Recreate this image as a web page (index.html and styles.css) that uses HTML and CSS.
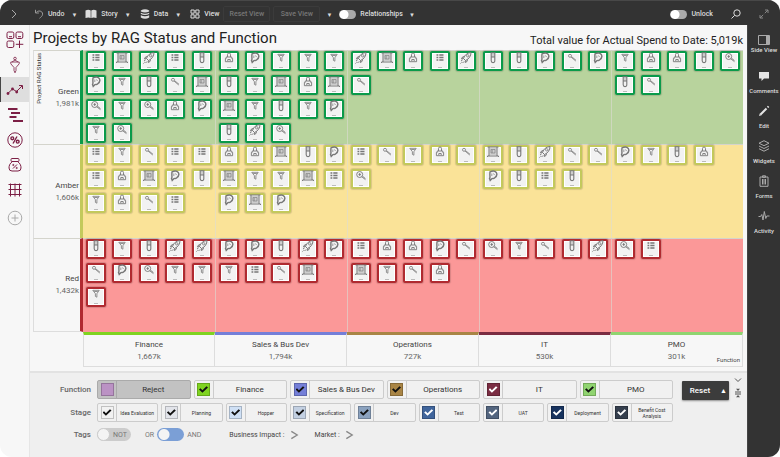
FILE: index.html
```html
<!DOCTYPE html>
<html lang="en">
<head>
<meta charset="utf-8">
<title>Projects by RAG Status and Function</title>
<link rel="stylesheet" href="styles.css">
</head>
<body>
<svg class="sprite" aria-hidden="true">
  <symbol id="t-list" viewBox="0 0 12 12"><path d="M2.500 3h1.800M5.300 3h4.200M2.500 5.500h1.800M5.300 5.500h4.200M2.500 8h1.800M5.300 8h4.200" stroke-width="1.400"/></symbol>
  <symbol id="t-screen" viewBox="0 0 12 12"><path d="M0.500 1h11M1 10h10" stroke-width="1.200"/><path d="M2 1v9M10 1v9M1 9.500l-.8 1.500M11 9.500l.8 1.500" stroke-width="1"/><path class="tint" d="M2.500 2h7v7h-7z"/><path d="M4 3.500h4v3.500H4zM5.200 4v3" stroke-width=".6"/></symbol>
  <symbol id="t-rocket" viewBox="0 0 12 12"><path d="M3.500 6.500C4.500 3 7 1 11 .5C11 4 9 7 5.500 8.500zM4.500 4.500L2.500 5L1.500 7L3.500 6.500M7.500 7.500L7 9.500L5.200 10.500L5.500 8.500M1 9l1.500-1M2.500 11l1.500-1.500M.5 11.500l1-1" stroke-width="1"/><circle cx="7.700" cy="3.800" r="1.200" stroke-width=".8"/></symbol>
  <symbol id="t-tube" viewBox="0 0 12 12"><path d="M3.500 .7h5M4.200 1v7.800a1.800 1.800 0 0 0 3.600 0V1M4.200 5h3.600" stroke-width="1.100"/><path class="tint" d="M4.700 1h2.600v4H4.700z"/></symbol>
  <symbol id="t-printer" viewBox="0 0 12 12"><path d="M4.500 5V2.500a1.500 1.500 0 0 1 3 0V5M3.200 5h5.600v1.500h.8v3.200H2.400V6.500h.8zM4.800 9V7.500h2.400V9" stroke-width=".9"/></symbol>
  <symbol id="t-hand" viewBox="0 0 12 12"><path d="M3 1.800C5 1 8 .8 9.300 2.500C10.500 4.500 9.500 6.500 7.500 8C6.500 9 5.500 7.800 4.500 9L3.200 10.500L2.500 8.500C3.500 7.500 2.500 6 3 1.800z" stroke-width="1.400"/><path d="M4.800 3.500v2.500M6.500 3.500l1 1.500" stroke-width=".7"/></symbol>
  <symbol id="t-funnel" viewBox="0 0 12 12"><path d="M2.800 2.300h6.400L6.900 5.700v3.500l-1.500-.8V5.700zM4.200 3.500h3.600" stroke-width=".8"/></symbol>
  <symbol id="t-key" viewBox="0 0 12 12"><circle cx="4" cy="3.800" r="1.500" stroke-width=".8"/><path d="M5 5l4.700 4M5.800 4.800L10 8.300" stroke-width=".8"/></symbol>
  <symbol id="t-zoom" viewBox="0 0 12 12"><circle cx="4.700" cy="4.500" r="3" stroke-width=".9"/><path d="M6.800 6.800l3.600 2.800M7.500 6.200l3 2.500M4.700 3v3M3.500 4.500h2.400" stroke-width=".9"/></symbol>
</svg>

<div class="app">
  <header class="toolbar">
    <button class="tool tool--lead" type="button" aria-label="Expand"><svg class="ico" viewBox="0 0 10 10"><path d="M3 1l4 4-4 4"/></svg></button>
    <button class="tool tool--undo" type="button"><svg class="ico" viewBox="0 0 10 10"><path d="M1.500 .8v3.200h3.400M1.800 3.800C4 .8 8.700 1.700 8.600 5.200C8.500 7 7 8 5.500 9.300"/></svg>Undo<span class="caret">▼</span></button>
    <button class="tool tool--story" type="button"><svg class="ico ico--wide" viewBox="0 0 12 10"><path class="solid" d="M.5 1.500Q3.500 0 5.700 1.500V9Q3.500 7.800.5 9zM6.300 1.500Q8.500 0 11.500 1.500V9Q8.500 7.800 6.300 9z"/></svg>Story<span class="caret">▼</span></button>
    <button class="tool tool--data" type="button"><svg class="ico" viewBox="0 0 10 10"><path class="solid" d="M.8 1.500Q5-1 9.200 1.500V2.600Q5 4.600.8 2.600zM.8 3.700Q5 5.700 9.200 3.700V5.100Q5 7 .8 5.100zM.8 6.200Q5 8.200 9.200 6.200V8.500Q5 11 .8 8.500z"/></svg>Data<span class="caret">▼</span></button>
    <button class="tool tool--view" type="button"><svg class="ico" viewBox="0 0 10 10"><path d="M1 1h3.200v3.200H1zM5.800 1H9v3.200H5.800zM1 5.800h3.200V9H1zM5.800 5.800H9V9H5.800z"/></svg>View</button>
    <div class="view-actions">
      <button class="ghost" type="button" disabled>Reset View</button>
      <button class="ghost" type="button" disabled>Save View</button>
      <button class="tool" type="button" aria-label="View options"><span class="caret">▼</span></button>
    </div>
    <label class="switch"><input type="checkbox">Relationships</label>
    <button class="tool tool--more" type="button" aria-label="Relationship options"><span class="caret">▼</span></button>
    <div class="toolbar-end">
      <label class="switch"><input type="checkbox">Unlock</label>
      <button class="tool" type="button" aria-label="Search"><svg class="ico" viewBox="0 0 10 10"><circle cx="6" cy="4" r="3.200"/><path d="M3.600 6.400L.5 9.500"/></svg></button>
      <button class="tool tool--dim" type="button" aria-label="Full screen"><svg class="ico" viewBox="0 0 10 10"><path d="M6 1h3v3M9 1L5.800 4.200M1 6v3h3M1 9l3.200-3.200"/></svg></button>
    </div>
  </header>

  <div class="workspace">
    <nav class="rail">
      <a class="rail-link" href="#" aria-label="Dashboards"><svg viewBox="0 0 18 18"><rect x="1" y="1" width="6.800" height="6.500" rx="1.500"/><rect x="10" y="1" width="6.800" height="6.500" rx="1.500"/><rect x="1" y="10" width="6.800" height="6.500" rx="1.500"/><path d="M13.500 9.500v7.500M9.800 13.300h7.500M3 5.700h3M12 5.700h3"/></svg></a>
      <a class="rail-link" href="#" aria-label="Funnel"><svg viewBox="0 0 18 18"><g stroke-width=".8"><circle cx="9" cy="2.500" r="1.300"/><path d="M4.800 6h8.400v1.800L10 11.500v3L9 16.800l-1-2.300v-3L4.800 7.800zM6 6l3-2 3 2"/></g></svg></a>
      <a class="rail-link rail-link--on" href="#" aria-label="Trends"><svg viewBox="0 0 18 18"><path d="M1.800 12.500L6.500 8l4 2.500L16 5M13 4.500h3.500V8"/><g class="solid"><circle cx="2" cy="12.500" r="1.400"/><circle cx="6.500" cy="8" r="1.400"/><circle cx="10.700" cy="11" r="1.400"/></g></svg></a>
      <a class="rail-link" href="#" aria-label="Roadmap"><svg viewBox="0 0 18 18"><path d="M2 3h9.500M5 7h9M3.500 11h7M7 15h10" stroke-width="2"/></svg></a>
      <a class="rail-link" href="#" aria-label="Ratios"><svg viewBox="0 0 18 18"><circle cx="9" cy="9" r="7.200"/><g stroke-width="1.400"><path d="M7 12.500l4-7"/><circle cx="6.300" cy="7.300" r="1.400"/><circle cx="11.700" cy="10.700" r="1.400"/></g></svg></a>
      <a class="rail-link" href="#" aria-label="Budget"><svg viewBox="0 0 18 18"><rect x="5" y="2.500" width="8" height="3" rx="1"/><path d="M6.500 5.500C3.500 7.500 3 10 3 12a3 3 0 0 0 3 3h6a3 3 0 0 0 3-3c0-2-.5-4.500-3.500-6.500M7 12.500L11 8.500"/><circle cx="7.300" cy="9" r=".6"/><circle cx="10.700" cy="12" r=".6"/></svg></a>
      <a class="rail-link" href="#" aria-label="Grid"><svg viewBox="0 0 18 18"><path d="M2.500 3.500h13M2.500 8.500h13M2.500 13.500h13M4.500 2.500v13M9 2.500v13M13.500 2.500v13"/></svg></a>
      <a class="rail-link rail-link--add" href="#" aria-label="Add"><svg viewBox="0 0 18 18"><circle cx="9" cy="9" r="6.800"/><path d="M9 5.500v7M5.500 9h7"/></svg></a>
    </nav>

    <main class="main">
      <div class="heading">
        <h1>Projects by RAG Status and Function</h1>
        <p>Total value for Actual Spend to Date: 5,019k</p>
      </div>

      <table class="matrix">
        <colgroup><col class="col-head"><col><col><col><col><col></colgroup>
        <tbody id="matrix-body">
          <tr class="band band--green">
            <th scope="row"><span class="axis-y">Project RAG Status</span>Green<small>1,981k</small></th>
            <td data-items="list screen rocket list tube hand funnel tube key screen zoom funnel zoom printer hand funnel zoom"></td>
            <td data-items="printer hand funnel funnel funnel tube funnel screen printer screen screen funnel tube funnel hand tube rocket zoom"></td>
            <td data-items="rocket screen printer list rocket key"></td>
            <td data-items="tube tube hand key hand"></td>
            <td data-items="funnel printer printer tube zoom tube key"></td>
          </tr>
          <tr class="band band--amber">
            <th scope="row">Amber<small>1,606k</small></th>
            <td data-items="list funnel key list list list printer screen hand tube funnel printer key list"></td>
            <td data-items="printer printer screen tube hand screen funnel funnel screen list hand screen hand"></td>
            <td data-items="list key funnel printer key zoom"></td>
            <td data-items="screen tube rocket key key hand tube list tube"></td>
            <td data-items="hand funnel tube printer"></td>
          </tr>
          <tr class="band band--red">
            <th scope="row">Red<small>1,432k</small></th>
            <td data-items="tube funnel tube rocket rocket key hand zoom funnel funnel funnel"></td>
            <td data-items="hand hand tube rocket hand funnel list key screen"></td>
            <td data-items="list printer printer hand key screen funnel key printer"></td>
            <td data-items="zoom funnel key tube rocket"></td>
            <td data-items="zoom list"></td>
          </tr>
        </tbody>
        <tfoot>
          <tr>
            <td></td>
            <th class="fn fn--finance" scope="col">Finance<small>1,667k</small></th>
            <th class="fn fn--sales" scope="col">Sales &amp; Bus Dev<small>1,794k</small></th>
            <th class="fn fn--ops" scope="col">Operations<small>727k</small></th>
            <th class="fn fn--it" scope="col">IT<small>530k</small></th>
            <th class="fn fn--pmo" scope="col">PMO<small>301k</small><span class="axis-x">Function</span></th>
          </tr>
        </tfoot>
      </table>

      <section class="filters">
        <div class="filter-grid">
          <span class="filter-name">Function</span>
          <div class="chips chips--function">
            <label class="chip chip--off"><span class="box"><input class="c-reject" type="checkbox"></span><span class="chip-text">Reject</span></label>
            <label class="chip"><span class="box"><input class="c-finance" type="checkbox" checked></span><span class="chip-text">Finance</span></label>
            <label class="chip"><span class="box"><input class="c-sales" type="checkbox" checked></span><span class="chip-text">Sales &amp; Bus Dev</span></label>
            <label class="chip"><span class="box"><input class="c-ops" type="checkbox" checked></span><span class="chip-text">Operations</span></label>
            <label class="chip"><span class="box"><input class="c-it light" type="checkbox" checked></span><span class="chip-text">IT</span></label>
            <label class="chip"><span class="box"><input class="c-pmo" type="checkbox" checked></span><span class="chip-text">PMO</span></label>
          </div>
          <span class="filter-name">Stage</span>
          <div class="chips chips--stage">
            <label class="chip"><span class="box"><input class="s-1" type="checkbox" checked></span><span class="chip-text">Idea Evaluation</span></label>
            <label class="chip"><span class="box"><input class="s-2" type="checkbox" checked></span><span class="chip-text">Planning</span></label>
            <label class="chip"><span class="box"><input class="s-3" type="checkbox" checked></span><span class="chip-text">Hopper</span></label>
            <label class="chip"><span class="box"><input class="s-4" type="checkbox" checked></span><span class="chip-text">Specification</span></label>
            <label class="chip"><span class="box"><input class="s-5" type="checkbox" checked></span><span class="chip-text">Dev</span></label>
            <label class="chip"><span class="box"><input class="s-6 light" type="checkbox" checked></span><span class="chip-text">Test</span></label>
            <label class="chip"><span class="box"><input class="s-7 light" type="checkbox" checked></span><span class="chip-text">UAT</span></label>
            <label class="chip"><span class="box"><input class="s-8 light" type="checkbox" checked></span><span class="chip-text">Deployment</span></label>
            <label class="chip"><span class="box"><input class="s-9 light" type="checkbox" checked></span><span class="chip-text">Benefit Cost Analysis</span></label>
          </div>
          <span class="filter-name">Tags</span>
          <div class="tags">
            <label class="pill pill--not"><input type="checkbox"><span>NOT</span></label>
            <label class="either"><span>OR</span><input type="checkbox"><span>AND</span></label>
            <button class="tag-more" type="button">Business Impact :<svg viewBox="0 0 10 10"><path d="M1.500 1l6.500 4-6.500 4"/></svg></button>
            <button class="tag-more" type="button">Market :<svg viewBox="0 0 10 10"><path d="M1.500 1l6.500 4-6.500 4"/></svg></button>
          </div>
        </div>
        <button class="reset" type="button"><span class="reset-text">Reset</span><span class="reset-caret">▲</span></button>
        <div class="panel-tools">
          <button type="button" aria-label="Collapse"><svg viewBox="0 0 8 8"><path d="M1 2.500l3 3 3-3"/></svg></button>
          <button type="button" aria-label="Resize"><svg class="tall" viewBox="0 0 8 10"><path d="M1 4h6M1 6h6"/><path class="solid" d="M2 .8h4L4 3zM2 9.200h4L4 7z"/></svg></button>
        </div>
      </section>
    </main>

    <aside class="side">
      <a class="side-link side-link--first" href="#"><svg viewBox="0 0 12 12"><path d="M.5 1.500h11v9H.5z"/><path class="solid" d="M8 2h3v8H8z"/></svg>Side View</a>
      <a class="side-link" href="#"><svg viewBox="0 0 12 12"><path class="solid bright" d="M1 2h10v6.500H6L3.500 11V8.500H1z"/></svg>Comments</a>
      <a class="side-link" href="#"><svg viewBox="0 0 12 12"><path class="bright" d="M2.500 9.500L8.500 3.500M9.600 2.400l1-1" stroke-width="2"/><path class="solid bright" d="M1 11l.8-2.500 1.700 1.700z"/></svg>Edit</a>
      <a class="side-link" href="#"><svg viewBox="0 0 12 12"><path d="M6 .7l5 2.500-5 2.500-5-2.500zM1 6l5 2.500L11 6M1 8.700l5 2.500 5-2.500"/></svg>Widgets</a>
      <a class="side-link" href="#"><svg viewBox="0 0 12 12"><path d="M2 2h8v9.300H2zM4.500 .8h3v1.500h-3zM4.500 4v5.500M6 4v5.500M7.500 4v5.500"/></svg>Forms</a>
      <a class="side-link" href="#"><svg viewBox="0 0 12 12"><path d="M.5 6.500h2L3.800 4.500 5 10 6.300 1.500 7.800 8.500 8.800 6h2.700"/></svg>Activity</a>
    </aside>
  </div>
</div>
<script src="matrix.js"></script>
</body>
</html>
```
FILE: styles.css
```css
* { box-sizing: border-box; }

body {
  margin: 0;
  background: #fff;
  color: #444;
  font-family: Roboto, "Liberation Sans", sans-serif;
  font-size: 8px;
}

button {
  margin: 0;
  padding: 0;
  border: 0;
  background: none;
  color: inherit;
  font: inherit;
}

a { color: inherit; text-decoration: none; }

svg { display: block; flex: none; fill: none; stroke: currentColor; }
.sprite { position: absolute; width: 0; height: 0; }
.solid { fill: currentColor; stroke: none; }

.app {
  display: flex;
  flex-direction: column;
  min-height: 100vh;
  overflow: hidden;
  border-radius: 12px;
  background: #f7f7f7;
}

/* Toolbar */
.toolbar {
  display: flex;
  align-items: center;
  height: 25px;
  padding: 2px 11px 0 9px;
  background: #333;
  border-top: 1px solid #484848;
  color: #ddd;
  font-size: 7px;
  font-weight: 500;
}
.tool { display: flex; align-items: center; gap: 4px; }
.tool--lead { margin-right: 15px; color: #aaa; }
.tool--undo { margin-right: 8px; }
.tool--story, .tool--data { margin-right: 9px; }
.tool--undo .ico { color: #999; }
.tool--dim { color: #888; }
.caret { margin-left: 3px; font-size: 6px; }
.ico { width: 10px; height: 10px; }
.ico--wide { width: 12px; }
.view-actions { display: flex; align-items: center; gap: 3px; margin: 0 7px 0 4px; }
.ghost {
  width: 47px;
  height: 16px;
  border: 1px solid #3b3b3b;
  border-radius: 2px;
  color: #777;
}
.switch { display: flex; align-items: center; gap: 4px; }
.switch input {
  appearance: none;
  width: 17px;
  height: 9px;
  margin: 0;
  border-radius: 5px;
  background: radial-gradient(circle at 5px 50%, #fff 4px, #aaa 5px);
}
.tool--more { margin-left: 3px; }
.toolbar-end { display: flex; align-items: center; gap: 18px; margin-left: auto; }

.workspace { display: flex; flex: 1; }

/* Left rail */
.rail {
  display: flex;
  flex-direction: column;
  flex: none;
  width: 30px;
  padding-top: 2px;
  border-right: 1px solid #e6e6e6;
  color: #7c1f45;
}
.rail-link {
  display: flex;
  align-items: center;
  justify-content: center;
  height: 25px;
  border-left: 1px solid transparent;
}
.rail-link svg { width: 18px; height: 18px; }
.rail-link--on { background: #dedede; border-left-color: #444; }
.rail-link--add { margin-top: 3px; color: #aaa; }

/* Main */
.main { display: flex; flex: 1; flex-direction: column; min-width: 0; }
.heading {
  display: flex;
  align-items: center;
  justify-content: space-between;
  height: 25px;
  padding: 0 4px 0 3px;
  color: #222;
}
.heading h1 { margin: 0; font-size: 15px; font-weight: 400; line-height: 24px; }
.heading p { margin: 0; padding-top: 6px; font-size: 11px; line-height: 14px; }

.matrix {
  width: calc(100% - 7px);
  margin: 0 4px 4px 3px;
  border-collapse: separate;
  border-spacing: 0;
  table-layout: fixed;
}
.matrix th { font-size: 8px; font-weight: 400; }
.matrix th, .matrix td { padding: 0; }
.matrix small { display: block; color: #666; font-size: 8px; }
.col-head { width: 50px; }
.band > * { height: 94px; border-top: 1px solid #d4d4cc; }
.band th {
  position: relative;
  padding-right: 1px;
  border-left: 1px solid #ddd;
  border-right: 3px solid var(--edge);
  line-height: 12px;
  text-align: right;
}
.band:last-child th { border-bottom: 1px solid #ddd; }
.band td { background: var(--fill); }
.band td + td { border-left: 1px solid #dcdcd499; }
.band--green { --edge: #0a9a4a; --fill: #b8d39d; }
.band--amber { --edge: #c3c95c; --fill: #fae398; }
.band--red { --edge: #b02a30; --fill: #fb9898; }
.axis-y {
  position: absolute;
  top: 2px;
  left: 1px;
  font-size: 6px;
  line-height: 8px;
  writing-mode: vertical-rl;
  transform: rotate(180deg);
  color: #333;
}
.tiles {
  display: grid;
  grid-template-columns: repeat(5, 1fr);
  grid-template-rows: repeat(4, 20px);
  row-gap: 4px;
  height: 93px;
}
.tile {
  display: flex;
  flex-direction: column;
  align-items: center;
  justify-content: space-between;
  width: 20px;
  height: 20px;
  margin-left: 3px;
  border: 2px solid var(--edge);
  border-radius: 2px;
  background: #f2f2f2;
  box-shadow: inset 0 0 0 1px #fff, 0 0 1px 1px #0002;
  color: #777;
}
.tile svg { width: 12px; height: 12px; margin-top: -1px; }
.tile::after { content: ""; width: 4px; height: 1px; margin-bottom: 1px; background: #bbb; }
.tint { fill: currentColor; fill-opacity: .3; stroke: none; }

.fn {
  position: relative;
  height: 35px;
  border-top: 3px solid var(--tone);
  border-bottom: 1px solid #ddd;
  border-right: 1px solid #ddd;
  line-height: 12px;
}
.fn--finance { --tone: #7fd320; border-left: 1px solid #ddd; }
.fn--sales { --tone: #747fd8; }
.fn--ops { --tone: #a98545; }
.fn--it { --tone: #7a2c42; }
.fn--pmo { --tone: #90d470; }
.axis-x { position: absolute; right: 2px; bottom: 0; font-size: 6px; }

/* Filters */
.filters {
  display: flex;
  flex: 1;
  align-items: flex-start;
  padding: 7px 5px 12px 0;
  border-top: 2px solid #e2e2e2;
  background: #efefef;
}
.filter-grid {
  display: grid;
  flex: 1;
  grid-template-columns: 61px 1fr;
  grid-template-rows: 19px 19px 17px;
  gap: 4px 6px;
  align-items: center;
  min-width: 0;
}
.filter-name { font-size: 8px; font-weight: 500; text-align: right; color: #666; }
.chips { display: grid; gap: 3px; }
.chips--function { grid-template-columns: repeat(6, 1fr); font-size: 8px; }
.chips--stage { grid-template-columns: repeat(9, 1fr); font-size: 5px; }
.chip {
  display: flex;
  min-width: 0;
  height: 19px;
  border: 1px solid #ccc;
  border-radius: 2px;
  background: #f1f1f1;
  color: #333;
}
.chip--off { background: #c2c2c2; border-color: #aaa; }
.box {
  display: flex;
  flex: none;
  align-items: center;
  justify-content: center;
  width: 19px;
  border-right: 1px solid #ccc;
}
.chip--off .box { border-color: #aaa; }
.chip-text { flex: 1; align-self: center; min-width: 0; padding: 0 2px; line-height: 6px; text-align: center; }
.box input {
  appearance: none;
  display: grid;
  place-items: center;
  width: 13px;
  height: 13px;
  margin: 0;
  border: 1px solid #0003;
  background: var(--c);
}
.box input:checked::before {
  content: "";
  width: 9px;
  height: 8px;
  background: #111;
  clip-path: polygon(0 50%, 17% 33%, 38% 58%, 83% 8%, 100% 25%, 38% 92%);
}
.box input.light:checked::before { background: #fff; }
.c-reject { --c: #bb92c4; }
.c-finance { --c: #7fd320; }
.c-sales { --c: #747fd8; }
.c-ops { --c: #a98545; }
.c-it { --c: #7a2c42; }
.c-pmo { --c: #90d470; }
.s-1 { --c: #f2f2f2; }
.s-2 { --c: #e2e4ea; }
.s-3 { --c: #cfe0f5; }
.s-4 { --c: #c3d0e2; }
.s-5 { --c: #8ba2bf; }
.s-6 { --c: #40659c; }
.s-7 { --c: #53657f; }
.s-8 { --c: #17335f; }
.s-9 { --c: #353f4e; }

.tags { display: flex; align-items: center; font-size: 7px; color: #777; }
.pill, .either { display: flex; align-items: center; }
.pill { width: 34px; height: 13px; border-radius: 7px; background: #ccc; }
.pill input, .either input { appearance: none; margin: 0; }
.pill input {
  width: 13px;
  height: 13px;
  margin-right: 3px;
  border: 1px solid #ccc;
  border-radius: 50%;
  background: #f4f4f4;
}
.either { gap: 3px; margin: 0 28px 0 14px; }
.either input {
  width: 27px;
  height: 13px;
  border-radius: 7px;
  background: radial-gradient(circle at 7px 50%, #f4f4f4 5px, #7b9fd6 6px);
}
.tag-more { display: flex; align-items: center; gap: 5px; margin-right: 16px; color: #444; }
.tag-more svg { width: 9px; height: 10px; color: #888; stroke-width: 1.5; }

.reset {
  display: flex;
  align-items: center;
  width: 47px;
  height: 19px;
  margin: 1px 5px 0 9px;
  border-radius: 1px;
  background: #3c3c3c;
  box-shadow: 0 1px 2px #0006;
  color: #fff;
  font-size: 8px;
  font-weight: 500;
}
.reset-text { flex: 1; }
.reset-caret { width: 11px; font-size: 7px; }
.panel-tools { display: flex; flex-direction: column; gap: 4px; margin-top: -4px; color: #555; }
.panel-tools svg { width: 8px; height: 8px; }
.panel-tools .tall { height: 10px; }

/* Right sidebar */
.side {
  flex: none;
  width: 33px;
  padding-top: 9px;
  background: #333;
  border-left: 1px solid #444;
  color: #ddd;
  font-size: 6px;
  font-weight: 500;
}
.side-link {
  display: flex;
  flex-direction: column;
  align-items: center;
  gap: 5px;
  height: 35px;
  line-height: 8px;
  white-space: nowrap;
}
.side-link--first { gap: 0; margin-bottom: 1px; }
.side-link svg { width: 12px; height: 12px; color: #aaa; }
.side-link .bright { color: #e4e4e4; stroke: currentColor; }
.side-link .solid.bright { stroke: none; }
```
FILE: matrix.js
```js
// Fills every cell with one tile per project listed in data-items.
const SVG_NS = "http://www.w3.org/2000/svg";

document.querySelectorAll("#matrix-body td").forEach((cell) => {
  const tiles = document.createElement("div");
  tiles.className = "tiles";
  cell.dataset.items.split(" ").forEach((name) => {
    const tile = document.createElement("button");
    tile.type = "button";
    tile.className = "tile";
    tile.setAttribute("aria-label", name + " project");
    const svg = document.createElementNS(SVG_NS, "svg");
    const use = document.createElementNS(SVG_NS, "use");
    use.setAttribute("href", "#t-" + name);
    svg.append(use);
    tile.append(svg);
    tiles.append(tile);
  });
  cell.append(tiles);
});
```
